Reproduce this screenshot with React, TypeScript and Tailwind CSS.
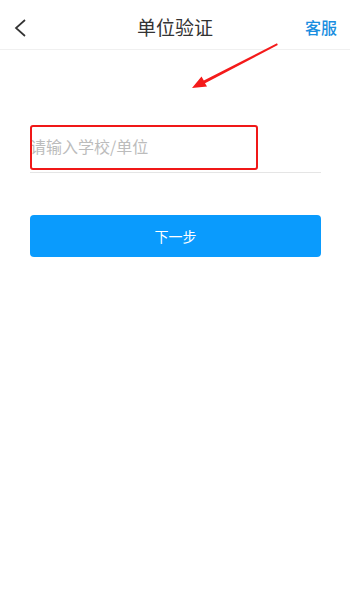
export default function App() {
  return (
    <div
      className="relative w-[350px] h-[597px] bg-white"
      style={{ fontFamily: '"Noto Sans CJK SC", "Noto Sans", sans-serif' }}
    >
      <div className="grid grid-cols-[1fr_auto_1fr] items-center h-[50px] border-b border-[#f0f0f0] px-[13px]">
        <svg width="16" height="20" viewBox="0 0 16 20" className="mt-[6px]">
          <polyline points="12,2 3,10 12,18" fill="none" stroke="#333" strokeWidth="1.7" />
        </svg>
        <p className="text-[19px] text-[#333] leading-none pt-[4px]">单位验证</p>
        <p className="text-[16px] text-[#1a8ee0] leading-none font-medium text-right pt-[4px]">客服</p>
      </div>

      <div className="flex flex-col px-[30px] pt-[76px] pr-[29px]">
        <div className="h-[47px] flex items-center border-b border-[#e5e5e5]">
          <input
            placeholder="请输入学校/单位"
            className="w-full outline-none text-[16px] placeholder:text-[#bcbcbc] -mt-[6px]"
          />
        </div>

        <button className="mt-[42px] h-[42px] w-full rounded-[4px] bg-[#0a9bfd] text-white text-[14px]">
          下一步
        </button>
      </div>

      <div className="absolute left-[30px] top-[125px] w-[228px] h-[45px] border-2 border-[#f01818] rounded-[3px]" />

      <svg className="absolute left-0 top-0" width="350" height="120" viewBox="0 0 350 120">
        <polygon
          points="192,88 201.5,76.5 203.8,80.4 277,43.3 277.8,45 205,83.2 207,86.5"
          fill="#f41a1a"
        />
      </svg>
    </div>
  );
}
